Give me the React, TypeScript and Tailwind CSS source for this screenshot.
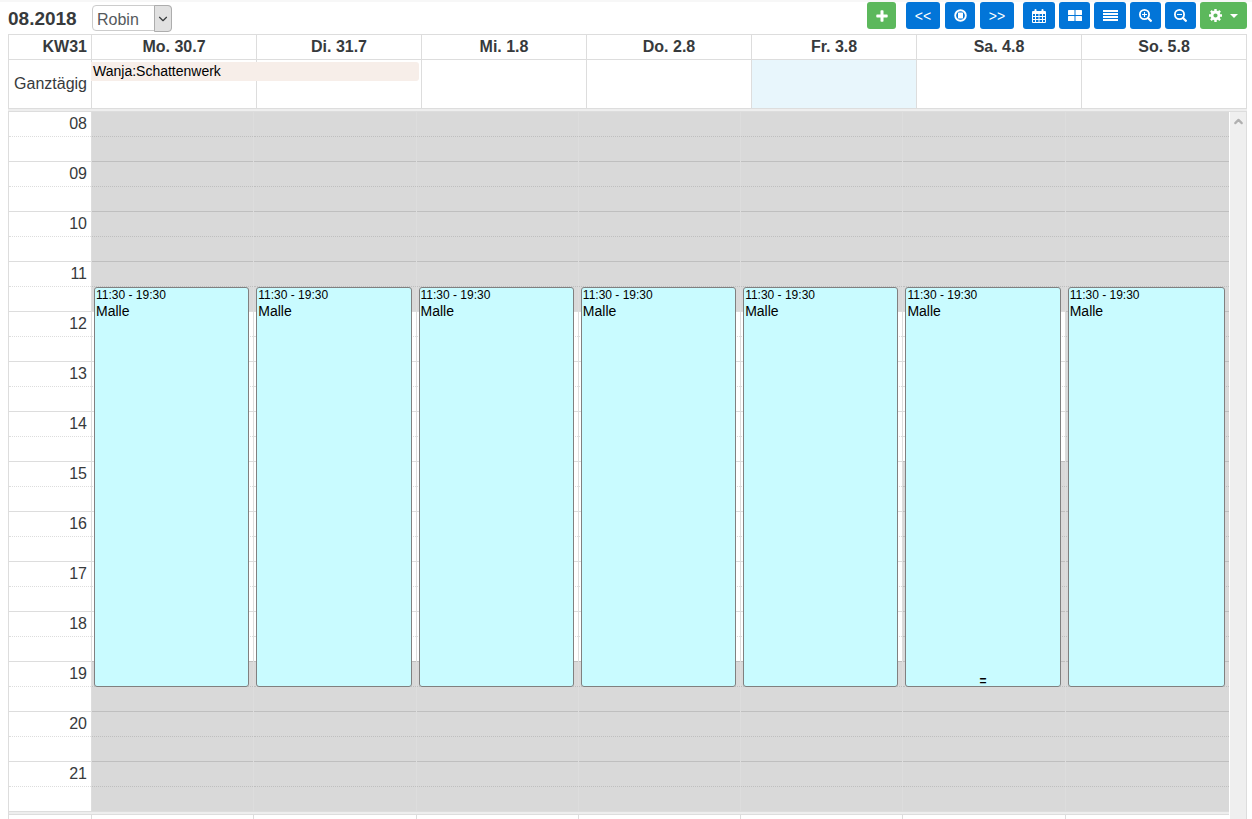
import React, { useState } from "react";
import { LuChevronDown, LuChevronUp } from "react-icons/lu";

const days = [
  { label: "Mo. 30.7", open: 12, close: 19 },
  { label: "Di. 31.7", open: 12, close: 19 },
  { label: "Mi. 1.8", open: 12, close: 19 },
  { label: "Do. 2.8", open: 12, close: 19 },
  { label: "Fr. 3.8", open: 12, close: 19, today: true },
  { label: "Sa. 4.8", open: 12, close: 15, resizer: true },
  { label: "So. 5.8", open: 0, close: 0 },
];

// half hour slots from 08:00 to 22:00
const slots = Array.from({ length: 28 }, (_, i) => 8 + i / 2);

const blue = "h-[27px] rounded-[3px] bg-[#0275d8] text-white flex items-center justify-center";
const green = "h-[27px] rounded-[3px] bg-[#5cb85c] text-white flex items-center justify-center";

const PlusIcon = () => (
  <svg width="12" height="12" viewBox="0 0 12 12" fill="currentColor">
    <path d="M4.5 1q0-.7.7-.7h1.6q.7 0 .7.7v3.5H11q.7 0 .7.7v1.6q0 .7-.7.7H7.5V11q0 .7-.7.7H5.2q-.7 0-.7-.7V7.5H1q-.7 0-.7-.7V5.2q0-.7.7-.7h3.5z" />
  </svg>
);

const TodayIcon = () => (
  <svg width="13" height="13" viewBox="0 0 13 13">
    <circle cx="6.5" cy="6.5" r="5.3" fill="none" stroke="currentColor" strokeWidth="1.9" />
    <rect x="4" y="3.6" width="5" height="5.8" rx=".5" fill="currentColor" />
  </svg>
);

const CalendarIcon = () => (
  <svg width="14" height="14" viewBox="0 0 14 14">
    <path
      fill="currentColor"
      fillRule="evenodd"
      d="M1 2h1.5V1q0-1 1-1t1 1v1h5V1q0-1 1-1t1 1v1H13q1 0 1 1v10q0 1-1 1H1q-1 0-1-1V3q0-1 1-1zM1 5v2h2V5zm3 0v2h2.5V5zm3.5 0v2H10V5zM11 5v2h2V5zM1 8v2h2V8zm3 0v2h2.5V8zm3.5 0v2H10V8zM11 8v2h2V8zM1 11v2h2v-2zm3 0v2h2.5v-2zm3.5 0v2H10v-2zm3.5 0v2h2v-2z"
    />
  </svg>
);

const GridIcon = () => (
  <svg width="14" height="11" viewBox="0 0 14 11" fill="currentColor">
    <rect width="6.5" height="5" rx=".6" />
    <rect x="7.5" width="6.5" height="5" rx=".6" />
    <rect y="6" width="6.5" height="5" rx=".6" />
    <rect x="7.5" y="6" width="6.5" height="5" rx=".6" />
  </svg>
);

const ListIcon = () => (
  <svg width="15" height="11" viewBox="0 0 15 11" fill="currentColor">
    <rect width="15" height="2" />
    <rect y="3" width="15" height="2" />
    <rect y="6" width="15" height="2" />
    <rect y="9" width="15" height="2" />
  </svg>
);

const ZoomIcon = ({ plus }: { plus?: boolean }) => (
  <svg width="13" height="13" viewBox="0 0 13 13" fill="none" stroke="currentColor">
    <circle cx="5.5" cy="5.5" r="4.6" strokeWidth="1.8" />
    <path d="M9 9l2.8 2.8" strokeWidth="2.3" strokeLinecap="round" />
    <path d={plus ? "M3 5.5h5M5.5 3v5" : "M3 5.5h5"} strokeWidth="1.1" />
  </svg>
);

const CogIcon = () => (
  <svg width="13" height="13" viewBox="0 0 13 13" fill="none" stroke="currentColor">
    <circle cx="6.5" cy="6.5" r="3.5" strokeWidth="2.8" />
    <path
      d="M6.5 0v2.2M6.5 10.8V13M0 6.5h2.2M10.8 6.5H13M1.9 1.9l1.5 1.5M9.6 9.6l1.5 1.5M11.1 1.9L9.6 3.4M3.4 9.6l-1.5 1.5"
      strokeWidth="2.4"
    />
  </svg>
);

const Toolbar = () => {
  const [person, setPerson] = useState("Robin");

  return (
    <div className="flex h-8 shrink-0 items-start justify-between">
      <div className="flex items-start pt-[3px]">
        <h1 className="w-[84px] text-[19px] font-bold leading-[28px]">08.2018</h1>
        <div className="relative">
          <select
            aria-label="Person"
            value={person}
            onChange={(e) => setPerson(e.target.value)}
            className="h-[26px] w-20 appearance-none rounded border border-[#ccc] bg-white pl-1 pt-1 text-base leading-5 text-[#55595c]"
          >
            <option>Robin</option>
            <option>Wanja</option>
          </select>
          <span className="pointer-events-none absolute inset-y-0 right-0 flex w-[18px] items-center justify-center rounded-r border border-[#adadad] bg-[#e1e1e1]">
            <LuChevronDown size={14} strokeWidth={2} className="shrink-0" />
          </span>
        </div>
      </div>
      <div className="flex text-sm">
        <button aria-label="Neu" className={`${green} mr-2.5 w-[29px]`}>
          <PlusIcon />
        </button>
        <div className="mr-[9px] flex gap-[5px]">
          <button className={`${blue} w-[34px]`}>&lt;&lt;</button>
          <button aria-label="Heute" className={`${blue} w-[30px]`}>
            <TodayIcon />
          </button>
          <button className={`${blue} w-[34px]`}>&gt;&gt;</button>
        </div>
        <div className="flex gap-1">
          <button aria-label="Monat" className={`${blue} w-8`}>
            <CalendarIcon />
          </button>
          <button aria-label="Woche" className={`${blue} w-[31px]`}>
            <GridIcon />
          </button>
          <button aria-label="Liste" className={`${blue} w-8`}>
            <ListIcon />
          </button>
          <button aria-label="Vergrößern" className={`${blue} w-[31px]`}>
            <ZoomIcon plus />
          </button>
          <button aria-label="Verkleinern" className={`${blue} w-[31px]`}>
            <ZoomIcon />
          </button>
          <button aria-label="Einstellungen" className={`${green} w-[47px] gap-2`}>
            <CogIcon />
            <svg width="8" height="4" viewBox="0 0 8 4" fill="currentColor">
              <path d="M0 0h8L4 4z" />
            </svg>
          </button>
        </div>
      </div>
    </div>
  );
};

const WeekHeader = () => (
  <table className="w-full shrink-0 table-fixed border-separate border-spacing-0 border-r border-t border-[#ddd]">
    <thead>
      <tr className="h-[25px]">
        <th className="w-[83px] border-b border-l border-[#ddd] p-0 pr-1 text-right leading-6">KW31</th>
        {days.map((day) => (
          <th key={day.label} className="border-b border-l border-[#ddd] p-0 leading-6">
            {day.label}
          </th>
        ))}
      </tr>
    </thead>
    <tbody>
      <tr className="h-12">
        <th className="border-l border-[#ddd] p-0 pr-1 text-right font-normal">Ganztägig</th>
        {days.map((day, i) => (
          <td
            key={day.label}
            className={`relative border-l border-[#ddd] p-0 ${day.today ? "bg-[#e8f6fc]" : ""}`}
          >
            {i === 0 && (
              <div className="absolute -left-px top-0.5 z-10 w-[200%]">
                <div className="h-[19px] rounded-r-[3px] bg-[#f7eee9] pl-0.5 text-sm leading-[19px] text-black">
                  Wanja:Schattenwerk
                </div>
              </div>
            )}
          </td>
        ))}
      </tr>
    </tbody>
  </table>
);

const Divider = () => <div className="h-1 shrink-0 border-y border-[#ddd] bg-[#eee]" />;

const DayColumn = ({ day }: { day: any }) => (
  <div className="relative border-l border-[#ddd] last:-mr-0.5">
    {slots.map((time, i) => {
      const closed = time < day.open || time >= day.close;
      return (
        <div
          key={time}
          className={`${i === 0 ? "h-6" : "h-[25px] border-t"} ${i % 2 ? "border-dotted" : ""} ${
            closed ? "border-[#bfbfbf] bg-[#d9d9d9]" : "border-[#ddd]"
          }`}
        />
      );
    })}
    {/* 11:30 is the 8th slot, 16 slots long */}
    <div className="absolute left-0.5 right-1 top-[175px] h-[400px] rounded-[3px] border border-[#808080] bg-[#c9fbff] pl-px text-black">
      <div className="text-xs leading-[15px]">11:30 - 19:30</div>
      <div className="text-sm leading-4">Malle</div>
      {day.resizer && (
        <div className="absolute inset-x-0 bottom-0 text-center text-xs font-bold leading-[10px]">=</div>
      )}
    </div>
  </div>
);

const App = () => {
  return (
    <div className="flex h-screen flex-col overflow-hidden border-t-2 border-[#f7f7f7] bg-white pl-2 pr-[5px] font-['Liberation_Sans',Arial,sans-serif] text-base text-[#373a3c]">
      <Toolbar />
      <WeekHeader />
      <Divider />
      <div className="flex min-h-0 flex-1 border-x border-[#ddd]">
        <div className="min-w-0 flex-1 overflow-hidden">
          <div className="flex">
            <div className="w-[82px] shrink-0">
              {slots.map((time, i) => (
                <div
                  key={time}
                  className={`border-[#ddd] pr-1 text-right leading-6 ${
                    i === 0 ? "h-6" : "h-[25px] border-t"
                  } ${i % 2 ? "border-dotted" : ""}`}
                >
                  {i % 2 === 0 && String(time).padStart(2, "0")}
                </div>
              ))}
            </div>
            <div className="grid flex-1 grid-cols-7 pr-0.5">
              {days.map((day) => (
                <DayColumn key={day.label} day={day} />
              ))}
            </div>
          </div>
          <Divider />
          <div className="flex h-6">
            <div className="w-[82px] shrink-0" />
            <div className="grid flex-1 grid-cols-7 pr-0.5">
              {days.map((day) => (
                <div key={day.label} className="border-l border-[#ddd]" />
              ))}
            </div>
          </div>
        </div>
        <div className="flex w-[17px] shrink-0 justify-center border-l border-white bg-[#efefef] pt-[3px] text-[#b0b0b0]">
          <LuChevronUp size={13} strokeWidth={4} />
        </div>
      </div>
    </div>
  );
};

export default App;
